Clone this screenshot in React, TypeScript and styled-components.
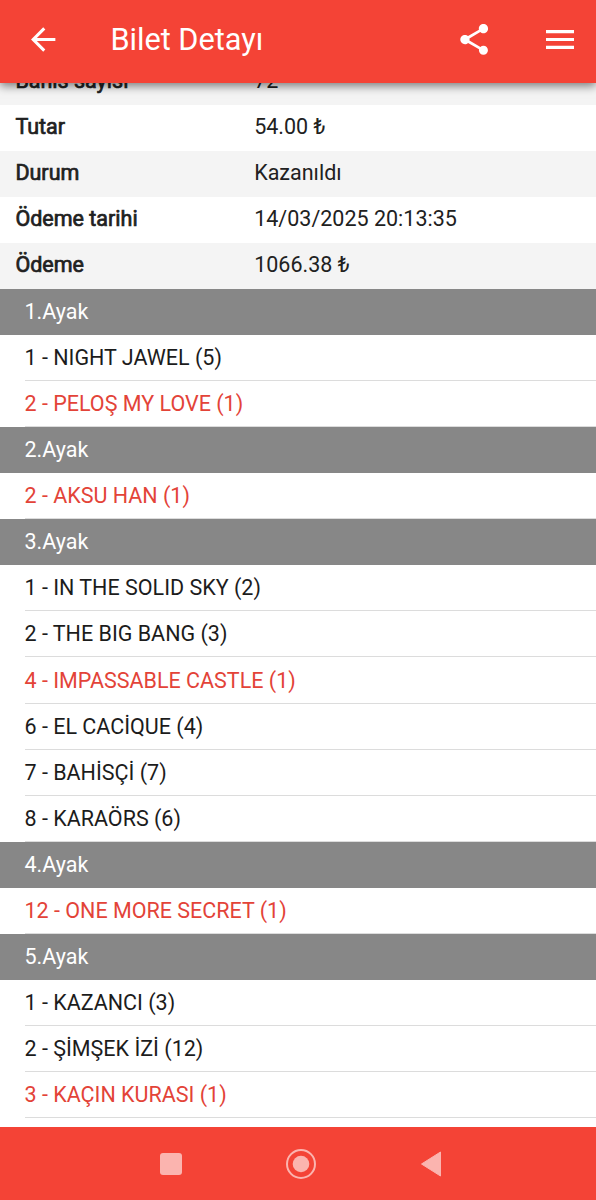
import React from 'react';
import styled, { createGlobalStyle } from 'styled-components';

const GlobalStyle = createGlobalStyle`
  * { box-sizing: border-box; }
  body { margin: 0; background: #fff; overflow: hidden; font-family: Roboto, sans-serif; }
`;

const Screen = styled.div`
  display: flex;
  flex-direction: column;
  width: 596px;
  height: 1200px;
  background: #fff;
`;

const AppBar = styled.header`
  flex: none;
  display: flex;
  align-items: center;
  height: 82.5px;
  padding: 0 21px 3px 28px;
  background: #f44336;
  color: #fff;
  box-shadow: 0 3px 9px rgba(0, 0, 0, 0.5);
  z-index: 1;
`;

const Title = styled.h1`
  flex: 1;
  margin: 0 0 0 51.4px;
  font-size: 30.7px;
  font-weight: 400;
  line-height: 40px;
`;

const IconButton = styled.button<{ $gap?: number }>`
  display: flex;
  padding: 0;
  border: 0;
  margin-left: ${({ $gap }) => $gap ?? 0}px;
  background: none;
  color: inherit;
`;

const Content = styled.main`
  flex: 1;
  min-height: 0;
  overflow: hidden;
`;

const Details = styled.dl`
  margin: -24px 0 0;
`;

const DetailRow = styled.div<{ $shaded: boolean }>`
  display: flex;
  align-items: center;
  height: 46.05px;
  padding: 0 15.4px 2px;
  font-size: 21.5px;
  color: #212121;
  background: ${({ $shaded }) => ($shaded ? '#f4f4f4' : '#fff')};
`;

const Label = styled.dt`
  width: 238.8px;
  -webkit-text-stroke: 0.7px currentColor;
`;

const Value = styled.dd`
  margin: 0;
`;

const LegHeader = styled.h2`
  display: flex;
  align-items: center;
  height: 46.1px;
  margin: 0;
  padding: 0 0 1px 24.5px;
  font-size: 21.5px;
  font-weight: 400;
  color: #fff;
  background: #878787;
`;

const Runners = styled.ul`
  margin: 0;
  padding: 0 0 0 24.5px;
  list-style: none;
`;

const Runner = styled.li<{ $winner?: boolean }>`
  display: flex;
  align-items: center;
  height: 46.1px;
  font-size: 21.5px;
  color: ${({ $winner }) => ($winner ? '#e34338' : '#1c1c1c')};
  border-bottom: 1px solid #dcdcdc;
`;

const NavBar = styled.nav`
  flex: none;
  display: flex;
  align-items: center;
  justify-content: center;
  gap: 100px;
  height: 73px;
  padding-left: 6px;
  background: #f44336;
`;

const details = [
  ['Bahis sayısı', '72'],
  ['Tutar', '54.00 ₺'],
  ['Durum', 'Kazanıldı'],
  ['Ödeme tarihi', '14/03/2025 20:13:35'],
  ['Ödeme', '1066.38 ₺'],
];

const legs = [
  { runners: ['1 - NIGHT JAWEL (5)', '2 - PELOŞ MY LOVE (1)'], winner: 1 },
  { runners: ['2 - AKSU HAN (1)'], winner: 0 },
  {
    runners: [
      '1 - IN THE SOLID SKY (2)',
      '2 - THE BIG BANG (3)',
      '4 - IMPASSABLE CASTLE (1)',
      '6 - EL CACİQUE (4)',
      '7 - BAHİSÇİ (7)',
      '8 - KARAÖRS (6)',
    ],
    winner: 2,
  },
  { runners: ['12 - ONE MORE SECRET (1)'], winner: 0 },
  { runners: ['1 - KAZANCI (3)', '2 - ŞİMŞEK İZİ (12)', '3 - KAÇIN KURASI (1)'], winner: 2 },
];

export default function App() {
  return (
    <Screen>
      <GlobalStyle />
      <AppBar>
        <IconButton aria-label="Geri">
          <svg width="31" height="31" viewBox="2 1.8 20.4 20.4" fill="currentColor">
            <path d="M20 11H7.83l5.59-5.59L12 4l-8 8 8 8 1.41-1.41L7.83 13H20z" />
          </svg>
        </IconButton>
        <Title>Bilet Detayı</Title>
        <IconButton aria-label="Paylaş">
          <svg width="37" height="37" viewBox="0.2 0 24 24" fill="currentColor">
            <path d="M18 16.08c-.76 0-1.44.3-1.96.77L8.91 12.7c.05-.23.09-.46.09-.7s-.04-.47-.09-.7l7.05-4.11c.54.5 1.25.81 2.04.81 1.66 0 3-1.34 3-3s-1.34-3-3-3-3 1.34-3 3c0 .24.04.47.09.7L8.04 9.81C7.5 9.31 6.79 9 6 9c-1.66 0-3 1.34-3 3s1.34 3 3 3c.79 0 1.5-.31 2.04-.81l7.12 4.16c-.05.21-.08.43-.08.65 0 1.61 1.31 2.92 2.92 2.92s2.92-1.31 2.92-2.92-1.31-2.92-2.92-2.92z" />
          </svg>
        </IconButton>
        <IconButton aria-label="Menü" $gap={52.5}>
          <svg width="30" height="19" viewBox="0 0 30 19" fill="currentColor">
            <path d="M1 0h28v3.2H1zM1 7.9h28v3.2H1zM1 15.8h28V19H1z" />
          </svg>
        </IconButton>
      </AppBar>
      <Content>
        <Details>
          {details.map(([label, value], i) => (
            <DetailRow key={label} $shaded={i % 2 === 0}>
              <Label>{label}</Label>
              <Value>{value}</Value>
            </DetailRow>
          ))}
        </Details>
        {legs.map((leg, i) => (
          <section key={i}>
            <LegHeader>{i + 1}.Ayak</LegHeader>
            <Runners>
              {leg.runners.map((name, j) => (
                <Runner key={name} $winner={j === leg.winner}>
                  {name}
                </Runner>
              ))}
            </Runners>
          </section>
        ))}
      </Content>
      <NavBar>
        <svg width="30" height="30" viewBox="0 0 30 30">
          <rect x="4" y="4" width="22" height="22" rx="3" fill="#fbb4af" />
        </svg>
        <svg width="30" height="30" viewBox="0 0 30 30">
          <circle cx="15" cy="15" r="14" fill="none" stroke="#fbb4af" strokeWidth="2" />
          <circle cx="15" cy="15" r="8.3" fill="#fbb4af" />
        </svg>
        <svg width="30" height="30" viewBox="0 0 30 30">
          <path d="M5.5 15 24.5 3v24z" fill="#fbb4af" stroke="#fbb4af" strokeLinejoin="round" />
        </svg>
      </NavBar>
    </Screen>
  );
}
